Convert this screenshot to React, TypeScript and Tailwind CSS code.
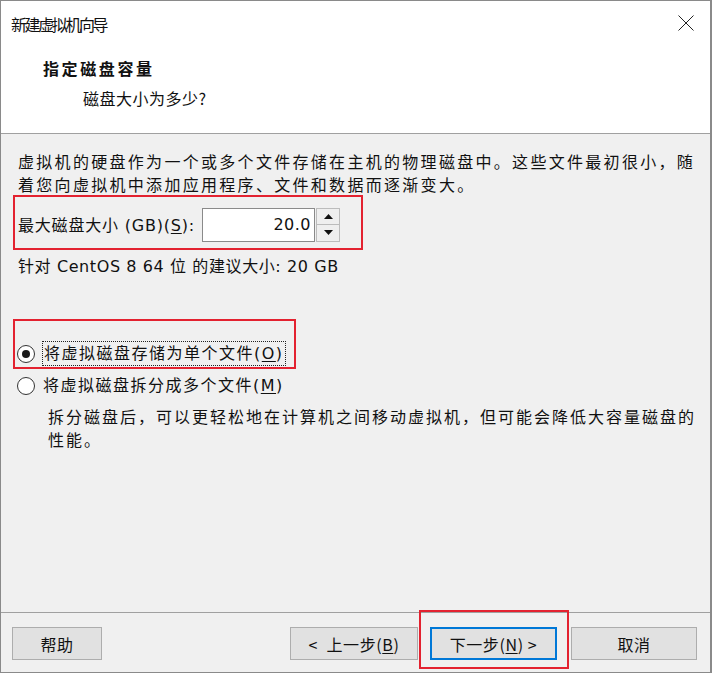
const cjk = "font-['Noto_Sans_CJK_SC',sans-serif]";
const body = "font-['DejaVu_Sans','Noto_Sans_CJK_SC',sans-serif]";

const Radio = ({ checked }: { checked?: boolean }) => (
  <span className="ml-[2px] flex h-[18px] w-[18px] shrink-0 items-center justify-center rounded-full border border-[#333333] bg-white">
    {checked && <span className="h-[8px] w-[8px] rounded-full bg-[#1a1a1a]" />}
  </span>
);

const Button = ({
  children,
  width,
  focused,
}: {
  children: React.ReactNode;
  width: string;
  focused?: boolean;
}) => (
  <button
    className={`flex h-[33px] items-center justify-center bg-[#e1e1e1] text-[16px] tracking-[0.6px] text-[#111] ${cjk} ${width} ${
      focused ? "border-2 border-[#0078d7]" : "border border-[#adadad]"
    }`}
  >
    {children}
  </button>
);

export default function App() {
  return (
    <div className="relative flex h-[673px] w-[712px] flex-col overflow-hidden border border-r-2 border-[#8a8a8a] bg-[#f0f0f0] text-[#111]">
      {/* title bar */}
      <div className="flex h-[45px] shrink-0 items-center justify-between bg-white pl-[10px] pr-[16px]">
        <span className={`text-[16px] tracking-[-2.4px] ${cjk}`}>新建虚拟机向导</span>
        <svg width="16" height="16" viewBox="0 0 16 16" className="mb-[2px]">
          <path d="M0.5 0.5 L15.5 15.5 M15.5 0.5 L0.5 15.5" stroke="#222" strokeWidth="1" />
        </svg>
      </div>

      {/* wizard header */}
      <div className={`h-[88px] shrink-0 border-b border-[#a0a0a0] bg-white pl-[42px] pt-[10px] ${cjk}`}>
        <div className="text-[16px] font-bold leading-[24px] tracking-[2.6px]">指定磁盘容量</div>
        <div className="ml-[40px] mt-[6px] text-[16px] leading-[24px] tracking-[0.5px]">磁盘大小为多少?</div>
      </div>

      {/* page body */}
      <div className={`flex-1 pl-[17px] pt-[17px] text-[16px] tracking-[2.3px] ${body}`}>
        <p className="leading-[23px]">
          虚拟机的硬盘作为一个或多个文件存储在主机的物理磁盘中。这些文件最初很小，随着您向虚拟机中添加应用程序、文件和数据而逐渐变大。
        </p>

        <div className="-ml-[5px] -mt-[2px] flex h-[55px] w-[350px] items-center border-2 border-[#e32230] pl-[3px] pt-[4px]">
          <label className="mt-[3px] whitespace-nowrap tracking-[0.8px]">
            最大磁盘大小 (GB)(<span className="underline underline-offset-2">S</span>):
          </label>
          <div className="ml-[7px] flex h-[34px]">
            <div className="flex w-[113px] items-center justify-end border border-[#8a8a8a] bg-white pr-[3px] tracking-[0.5px]">
              20.0
            </div>
            <div className="ml-[1px] flex w-[24px] flex-col">
              <span className="flex h-[17px] items-center justify-center border border-[#bcbcbc] bg-[#efefef]">
                <svg width="9" height="5" viewBox="0 0 9 5">
                  <path d="M4.5 0 L9 5 L0 5 Z" fill="#111" />
                </svg>
              </span>
              <span className="flex h-[17px] items-center justify-center border border-t-0 border-[#bcbcbc] bg-[#efefef]">
                <svg width="9" height="5" viewBox="0 0 9 5">
                  <path d="M0 0 L9 0 L4.5 5 Z" fill="#111" />
                </svg>
              </span>
            </div>
          </div>
        </div>

        <p className="mt-[5px] leading-[23px] tracking-[0.6px]">
          针对 CentOS 8 64 位 的建议大小: 20 GB
        </p>

        <div className="-ml-[5px] mt-[41px] h-[50px] w-[283px] border-2 border-[#e32230] pt-[20px]">
          <div className="flex h-[25px] items-center">
            <Radio checked />
            <span className="ml-[7px] flex h-[25px] items-center whitespace-nowrap border border-dotted border-[#222] px-[1px] tracking-[1.5px]">
              将虚拟磁盘存储为单个文件(<span className="underline underline-offset-2">O</span>)
            </span>
          </div>
        </div>

        <div className="-ml-[3px] mt-[4px] flex h-[25px] items-center">
          <Radio />
          <span className="ml-[8px] whitespace-nowrap tracking-[1.5px]">
            将虚拟磁盘拆分成多个文件(<span className="underline underline-offset-2">M</span>)
          </span>
        </div>

        <p className="ml-[30px] mt-[8px] leading-[23px] tracking-[2px]">
          拆分磁盘后，可以更轻松地在计算机之间移动虚拟机，但可能会降低大容量磁盘的性能。
        </p>
      </div>

      {/* button row */}
      <div className="flex h-[60px] shrink-0 items-start border-t border-[#a0a0a0] pl-[11px] pt-[14px]">
        <Button width="w-[90px]">帮助</Button>
        <div className="ml-[188px] flex">
          <Button width="w-[128px]">
            &lt;&nbsp; 上一步(<span className="underline underline-offset-2">B</span>)
          </Button>
          <div className="ml-[12px]">
            <Button width="w-[127px]" focused>
              下一步(<span className="underline underline-offset-2">N</span>) &gt;
            </Button>
          </div>
          <div className="ml-[14px]">
            <Button width="w-[126px]">取消</Button>
          </div>
        </div>
      </div>

      {/* highlight around the next button */}
      <div className="pointer-events-none absolute left-[418px] top-[609px] h-[59px] w-[150px] border-2 border-[#e32230]" />
    </div>
  );
}
